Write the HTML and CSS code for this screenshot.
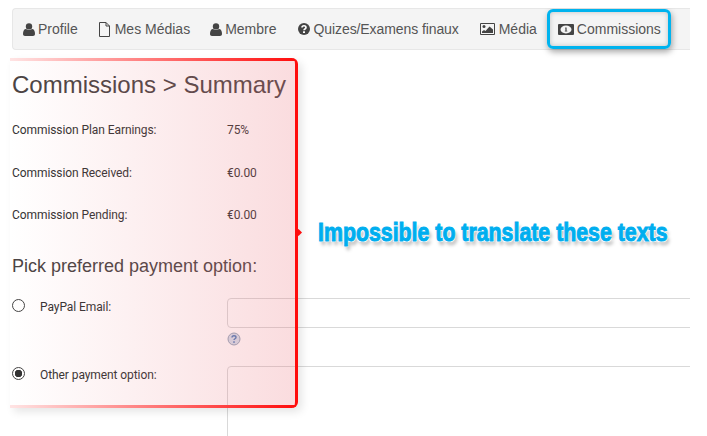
FILE: index.html
```html
<!DOCTYPE html>
<html lang="fr">
<head>
    <meta charset="UTF-8">
    <meta name="viewport" content="width=device-width, initial-scale=1.0">
    <title>Commissions</title>
    <link rel="stylesheet" href="styles.css">
</head>
<body>
    <div class="page">
        <nav class="tabs">
            <a class="tab" href="#">
                <span class="tab-icon"><svg width="12" height="13" viewBox="0 0 12 13"><circle cx="6" cy="3.4" r="3.2"/><path d="M0 11c0-3 1-5 3-5 .8.6 1.8 1 3 1s2.200-.4 3-1c2 0 3 2 3 5 0 1.200-.8 2-2 2H2c-1.200 0-2-.8-2-2z"/></svg></span>Profile
            </a>
            <a class="tab" href="#">
                <span class="tab-icon icon-file"><svg width="13" height="15" viewBox="0 0 13 15"><path class="line" d="M1.500.5h6.500l3.500 3.500v10.500h-10zM8 .5v3.500h3.500"/></svg></span>Mes Médias
            </a>
            <a class="tab" href="#">
                <span class="tab-icon"><svg width="12" height="13" viewBox="0 0 12 13"><circle cx="6" cy="3.4" r="3.2"/><path d="M0 11c0-3 1-5 3-5 .8.6 1.800 1 3 1s2.200-.4 3-1c2 0 3 2 3 5 0 1.200-.8 2-2 2H2c-1.200 0-2-.8-2-2z"/></svg></span>Membre
            </a>
            <a class="tab tab-quiz" href="#">
                <span class="tab-icon icon-quiz"><svg width="12" height="12" viewBox="0 0 12 12"><circle cx="6" cy="6" r="6"/><path class="line-white" d="M4 4.600c0-1.200.9-1.800 2-1.800s2 .7 2 1.700c0 1.500-2 1.400-2 2.700"/><rect class="fill-white" x="5" y="8.300" width="2" height="1.700"/></svg></span>Quizes/Examens finaux
            </a>
            <a class="tab" href="#">
                <span class="tab-icon icon-wide"><svg width="15" height="12" viewBox="0 0 15 12"><path class="line" d="M.5.5h14v11H.5z"/><circle cx="4" cy="3.500" r="1.500"/><path d="M2 10V8.500L4 7l1.500 1L9.500 3.500 13 6.500V10z"/></svg></span>Média
            </a>
            <a class="tab tab-active" href="#">
                <span class="tab-icon icon-wide"><svg width="16" height="11" viewBox="0 0 16 11"><path fill-rule="evenodd" d="M1 0h14a1 1 0 0 1 1 1v9a1 1 0 0 1-1 1H1a1 1 0 0 1-1-1V1a1 1 0 0 1 1-1zM2.500 5.500a5.500 3.900 0 1 0 11 0a5.500 3.900 0 1 0-11 0z"/><path d="M7.200 3.500h1.400v3.300h.7v.8H6.800v-.8h.6V4.400h-.2z"/></svg></span>Commissions
            </a>
        </nav>

        <main class="summary">
            <h2 class="summary-title">Commissions &gt; Summary</h2>
            <div class="stat"><span class="stat-label">Commission Plan Earnings:</span><span>75%</span></div>
            <div class="stat"><span class="stat-label">Commission Received:</span><span>€0.00</span></div>
            <div class="stat"><span class="stat-label">Commission Pending:</span><span>€0.00</span></div>

            <h3 class="pay-title">Pick preferred payment option:</h3>
            <div class="pay-row">
                <input class="radio" type="radio" name="pay">
                <label class="pay-label">PayPal Email:</label>
                <div class="pay-field">
                    <input class="text-input" type="text">
                    <svg class="help" width="14" height="14" viewBox="0 0 14 14"><circle cx="7" cy="7" r="6" fill="#d3dfec" stroke="#94a6ba"/><path d="M5 5.500c0-1.200.9-1.800 2-1.800s2 .7 2 1.700c0 1.400-2 1.300-2 2.700" fill="none" stroke="#4f7cb8" stroke-width="1.400"/><rect x="6.200" y="9.300" width="1.600" height="1.500" fill="#4f7cb8"/></svg>
                </div>
            </div>
            <div class="pay-row">
                <input class="radio" type="radio" name="pay" checked>
                <label class="pay-label">Other payment option:</label>
                <div class="pay-field">
                    <textarea class="text-area"></textarea>
                </div>
            </div>
        </main>
    </div>

    <div class="callout-box"></div>
    <div class="callout-text">Impossible to translate these texts</div>
</body>
</html>
```

FILE: styles.css
```css
html, body {
    height: 100%;
}
body {
    margin: 0;
    overflow: hidden;
    background-color: #ffffff;
    font-family: "Liberation Sans", sans-serif;
    color: #444444;
}
.page {
    width: 678px;
    height: 428px;
    margin: 8px 0 0 12px;
    overflow: hidden;
}
.tabs {
    display: flex;
    box-sizing: border-box;
    height: 42px;
    background-color: #f4f4f4;
    border: 1px solid #e7e7e7;
    border-right: 0;
    border-radius: 4px 0 0 4px;
}
.tab {
    position: relative;
    display: flex;
    align-items: center;
    padding: 0 10px;
    font-size: 14px;
    color: #555555;
    text-decoration: none;
}
.tab-quiz {
    letter-spacing: -0.09px;
}
.tab-icon {
    display: flex;
    width: 15px;
    flex-shrink: 0;
}
.tab-icon svg {
    fill: #444444;
}
.icon-file {
    width: 17px;
}
.icon-quiz {
    width: 17px;
    padding-left: 1px;
    box-sizing: border-box;
}
.icon-wide {
    width: 20px;
    padding-left: 1px;
    box-sizing: border-box;
}
.line {
    fill: none;
    stroke: #444444;
}
.line-white {
    fill: none;
    stroke: #ffffff;
    stroke-width: 1.6;
}
.tab-icon .fill-white {
    fill: #ffffff;
}
.tab-active::after {
    content: "";
    position: absolute;
    top: 0;
    bottom: 0;
    left: 0;
    right: 0;
    border: 3px solid #00b3ee;
    border-radius: 6px;
    box-shadow: 1px 3px 6px rgba(0, 0, 0, 0.35), inset 0 0 5px rgba(0, 0, 0, 0.2);
}
.summary {
    font-family: Roboto, sans-serif;
    font-size: 12px;
    letter-spacing: -0.08px;
    color: #333333;
}
.summary-title {
    margin: 21px 0 24px;
    font-family: "Liberation Sans", sans-serif;
    font-size: 24px;
    line-height: 28px;
    font-weight: normal;
    letter-spacing: 0;
    color: #4a4444;
}
.stat {
    display: flex;
    height: 42.5px;
    line-height: 14px;
}
.stat-label {
    width: 215px;
}
.pay-title {
    margin: 0 0 21px;
    padding-top: 4.5px;
    font-family: "Liberation Sans", sans-serif;
    font-size: 18px;
    line-height: 22px;
    font-weight: normal;
    letter-spacing: 0;
    color: #4a4444;
}
.pay-row {
    display: flex;
}
.radio {
    flex: none;
    appearance: none;
    width: 13px;
    height: 13px;
    margin: 1px 15px 0 0;
    border: 1px solid #444444;
    border-radius: 50%;
    background-color: #ffffff;
    box-sizing: border-box;
}
.radio:checked {
    background: radial-gradient(circle, #333333 0 3.5px, #ffffff 4px);
}
.pay-label {
    flex: none;
    width: 187px;
    padding-top: 2px;
    line-height: 14px;
}
.pay-field {
    flex: none;
    display: flex;
    flex-direction: column;
    align-items: flex-start;
}
.text-input, .text-area {
    display: block;
    width: 500px;
    box-sizing: border-box;
    padding: 0;
    background-color: #ffffff;
    border: 1px solid #d9d9d9;
    border-radius: 4px;
    outline: none;
    resize: none;
}
.text-input {
    height: 30px;
}
.text-area {
    height: 120px;
}
.help {
    margin-top: 4px;
    margin-bottom: 20px;
}

/* annotations drawn over the screenshot */
.callout-box {
    position: absolute;
    left: 10px;
    top: 58px;
    width: 288px;
    height: 350px;
    box-sizing: border-box;
    border-right: 3px solid #ff0d0d;
    border-radius: 0 6px 6px 0;
    background:
        linear-gradient(to right, #ffe4e4, #ff0d0d) top / 100% 3px no-repeat,
        linear-gradient(to right, #ffe4e4, #ff0d0d) bottom / 100% 3px no-repeat,
        linear-gradient(to right, rgba(235, 110, 120, 0), rgba(235, 110, 120, 0.24));
    box-shadow: 4px 4px 8px rgba(0, 0, 0, 0.1);
}
.callout-box::after {
    content: "";
    position: absolute;
    right: -6px;
    top: 172px;
    width: 5px;
    height: 5px;
    background-color: #ff0d0d;
    transform: rotate(45deg);
}
.callout-text {
    position: absolute;
    left: 318px;
    top: 217px;
    font-family: "Liberation Sans", sans-serif;
    font-size: 26px;
    line-height: 30px;
    font-weight: bold;
    white-space: nowrap;
    color: #00aeef;
    -webkit-text-stroke: 1px #00aeef;
    transform: scaleX(0.82);
    transform-origin: left center;
    text-shadow: 1px 1px 0 #ffffff, -1px -1px 0 #ffffff, 1px -1px 0 #ffffff, -1px 1px 0 #ffffff, 3px 4px 4px rgba(0, 0, 0, 0.3);
}
```
